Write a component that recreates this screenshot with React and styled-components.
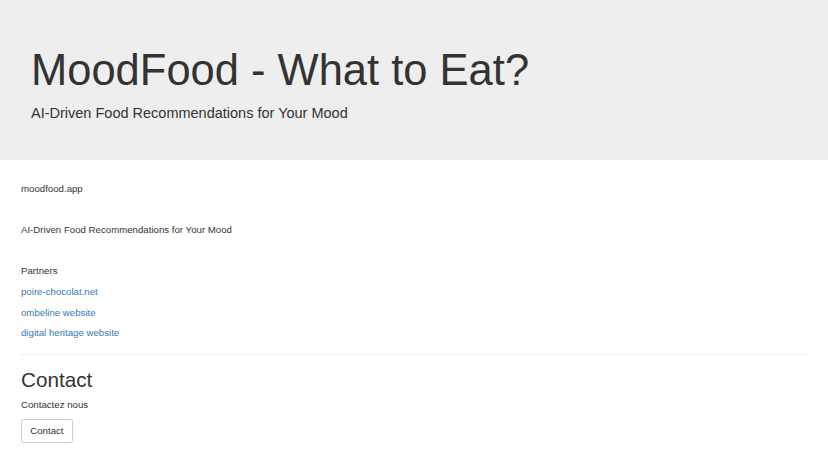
import React from 'react'
import styled, { createGlobalStyle } from 'styled-components'

const GlobalStyle = createGlobalStyle`
  * { box-sizing: border-box; }
  body {
    margin: 0;
    font-family: 'Liberation Sans', Arial, sans-serif;
    font-size: 9.66px;
    line-height: 13.8px;
    color: #333;
    background: #fff;
  }
`

const partners = [
  { label: 'poire-chocolat.net', href: '#' },
  { label: 'ombeline website', href: '#' },
  { label: 'digital heritage website', href: '#' },
]

const App = () => {
  return (
    <Page>
      <GlobalStyle />
      <Jumbotron>
        <Title>MoodFood - What to Eat?</Title>
        <Lead>AI-Driven Food Recommendations for Your Mood</Lead>
      </Jumbotron>
      <Container>
        <Text $gap>moodfood.app</Text>
        <Text $gap>AI-Driven Food Recommendations for Your Mood</Text>
        <Text>Partners</Text>
        {partners.map((p) => (
          <Text key={p.label}>
            <Link href={p.href}>{p.label}</Link>
          </Text>
        ))}
        <Rule />
        <Heading>Contact</Heading>
        <Text>Contactez nous</Text>
        <Button type="button">Contact</Button>
      </Container>
    </Page>
  )
}

export default App

const Page = styled.div`
  width: 100%;
`

const Jumbotron = styled.header`
  background-color: #eee;
  padding: 32.5px 30px 25.5px 31px;
  margin-bottom: 22px;
`

const Title = styled.h1`
  margin: 14px 0 9px;
  font-size: 43.5px;
  line-height: 1.1;
  font-weight: 400;
  color: #333;
`

const Lead = styled.p`
  margin: 0 0 10px;
  font-size: 14.5px;
  line-height: 20.7px;
  font-weight: 400;
`

const Container = styled.main`
  padding: 0 21px;
  display: flow-root;
`

const Text = styled.p`
  margin: 0 0 ${(p) => (p.$gap ? '27.6px' : '6.9px')};
`

const Link = styled.a`
  color: #337ab7;
  text-decoration: none;
`

const Rule = styled.hr`
  margin: 13.8px 0;
  border: 0;
  border-top: 1px solid #eee;
`

const Heading = styled.h2`
  margin: 13.8px 0 6.9px;
  font-size: 20.7px;
  line-height: 1.1;
  font-weight: 400;
`

const Button = styled.button`
  display: inline-block;
  font-family: inherit;
  font-size: 9.66px;
  line-height: 13.8px;
  padding: 4.14px 8.28px;
  color: #333;
  background-color: #fff;
  border: 1px solid #ccc;
  border-radius: 2.76px;
  cursor: pointer;
`
